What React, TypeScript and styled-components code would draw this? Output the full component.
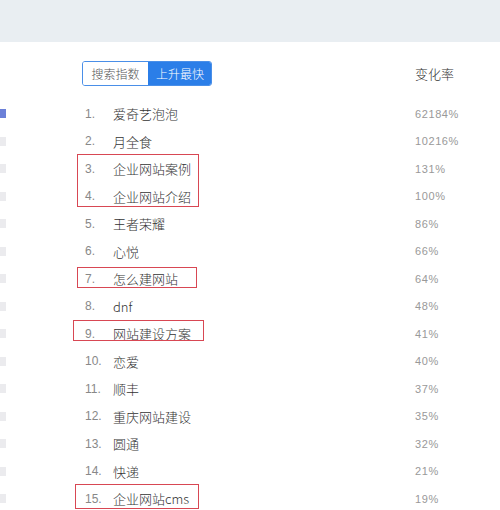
import React from "react";
import styled, { createGlobalStyle } from "styled-components";

const GlobalStyle = createGlobalStyle`
  html, body { margin: 0; padding: 0; background: #fff; }
  body {
    font-family: "Liberation Sans", Arial, "Noto Sans CJK SC", sans-serif;
    color: #333;
  }
`;

const Page = styled.div`
  width: 500px;
  height: 510px;
  overflow: hidden;
  background: #fff;
`;

const TopBand = styled.div`
  height: 42px;
  background: #e9eef2;
`;

const Panel = styled.div`
  display: flex;
  flex-direction: column;
`;

const HeaderRow = styled.div`
  display: grid;
  grid-template-columns: 82px 333px 1fr;
  align-items: center;
  margin-top: 19px;
  height: 25px;
  margin-bottom: 14px;
`;

const Toggle = styled.div`
  grid-column: 2;
  display: flex;
  width: 130px;
  height: 25px;
  box-sizing: border-box;
  border: 1px solid #4a8fe8;
  border-radius: 3px;
  overflow: hidden;
`;

const ToggleBtn = styled.div<{ $active?: boolean }>`
  display: flex;
  align-items: center;
  justify-content: center;
  flex: 0 0 ${(p) => (p.$active ? "64px" : "65px")};
  font-size: 12px;
  font-weight: 300;
  font-family: "Noto Sans CJK SC", sans-serif;
  color: ${(p) => (p.$active ? "#fff" : "#555")};
  background: ${(p) => (p.$active ? "#2b7ee8" : "#fff")};
`;

const ColTitle = styled.div`
  grid-column: 3;
  font-size: 13px;
  font-weight: 300;
  font-family: "Noto Sans CJK SC", sans-serif;
  color: #333;
  line-height: 25px;
`;

const List = styled.div`
  position: relative;
  display: flex;
  flex-direction: column;
`;

const Row = styled.div`
  display: grid;
  grid-template-columns: 6px 79px 28px 302px 1fr;
  align-items: center;
  height: 27.5px;
`;

const Marker = styled.div<{ $active?: boolean }>`
  width: 6px;
  height: 9px;
  background: ${(p) => (p.$active ? "#6b80d8" : "#ebebee")};
`;

const Rank = styled.div`
  grid-column: 3;
  font-size: 12px;
  color: #888;
`;

const Name = styled.div`
  grid-column: 4;
  font-size: 13px;
  font-weight: 300;
  color: #333;
  font-family: "Noto Sans CJK SC", sans-serif;
`;

const Rate = styled.div`
  grid-column: 5;
  font-size: 11px;
  letter-spacing: 0.6px;
  color: #999;
`;

const Highlight = styled.div<{ $t: number; $l: number; $w: number; $h: number }>`
  position: absolute;
  top: ${(p) => p.$t}px;
  left: ${(p) => p.$l}px;
  width: ${(p) => p.$w}px;
  height: ${(p) => p.$h}px;
  box-sizing: border-box;
  border: 1px solid #d84753;
  pointer-events: none;
`;

const rows: [string, string][] = [
  ["爱奇艺泡泡", "62184%"],
  ["月全食", "10216%"],
  ["企业网站案例", "131%"],
  ["企业网站介绍", "100%"],
  ["王者荣耀", "86%"],
  ["心悦", "66%"],
  ["怎么建网站", "64%"],
  ["dnf", "48%"],
  ["网站建设方案", "41%"],
  ["恋爱", "40%"],
  ["顺丰", "37%"],
  ["重庆网站建设", "35%"],
  ["圆通", "32%"],
  ["快递", "21%"],
  ["企业网站cms", "19%"],
];

const highlights = [
  { t: 54, l: 77, w: 122, h: 53 },
  { t: 167, l: 77, w: 120, h: 21 },
  { t: 220, l: 73, w: 131, h: 21 },
  { t: 384, l: 75, w: 124, h: 25 },
];

export default function App() {
  return (
    <Page>
      <GlobalStyle />
      <TopBand />
      <Panel>
        <HeaderRow>
          <Toggle>
            <ToggleBtn>搜索指数</ToggleBtn>
            <ToggleBtn $active>上升最快</ToggleBtn>
          </Toggle>
          <ColTitle>变化率</ColTitle>
        </HeaderRow>
        <List>
          {rows.map(([name, rate], i) => (
            <Row key={name}>
              <Marker $active={i === 0} />
              <Rank>{i + 1}.</Rank>
              <Name>{name}</Name>
              <Rate>{rate}</Rate>
            </Row>
          ))}
          {highlights.map((h, i) => (
            <Highlight key={i} $t={h.t} $l={h.l} $w={h.w} $h={h.h} />
          ))}
        </List>
      </Panel>
    </Page>
  );
}
